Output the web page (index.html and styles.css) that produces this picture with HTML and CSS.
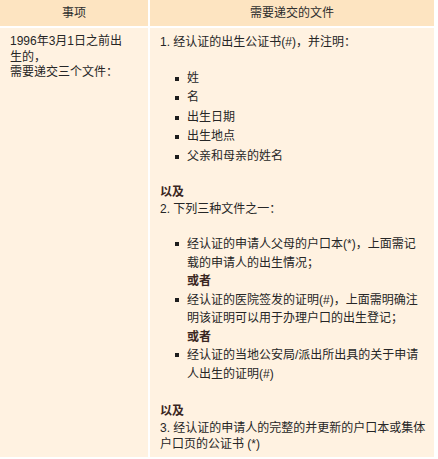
FILE: index.html
```html
<!DOCTYPE html>
<html lang="zh">
<head>
<meta charset="utf-8">
<link rel="stylesheet" href="styles.css">
</head>
<body>
<div class="table">
  <div class="th">事项</div>
  <div class="th">需要递交的文件</div>
  <div class="td col1">1996年3月1日之前出生的，<br>需要递交三个文件：</div>
  <div class="td col2">
    <p class="para">1. 经认证的出生公证书(#)，并注明：</p>
    <ul class="list list-a">
      <li>姓</li>
      <li>名</li>
      <li>出生日期</li>
      <li>出生地点</li>
      <li>父亲和母亲的姓名</li>
    </ul>
    <p class="para"><b class="em">以及</b><br>2. 下列三种文件之一：</p>
    <ul class="list list-b">
      <li>经认证的申请人父母的户口本(*)，上面需记载的申请人的出生情况；<br><b class="em">或者</b></li>
      <li>经认证的医院签发的证明(#)，上面需明确注明该证明可以用于办理户口的出生登记；<br><b class="em">或者</b></li>
      <li>经认证的当地公安局/派出所出具的关于申请人出生的证明(#)</li>
    </ul>
    <p class="para"><b class="em">以及</b><br>3. 经认证的申请人的完整的并更新的户口本或集体户口页的公证书 (*)</p>
  </div>
</div>
</body>
</html>
```

FILE: styles.css
```css
html, body {
  margin: 0;
  padding: 0;
  background: #ffffff;
}

body {
  font-family: "Liberation Sans", "Noto Sans CJK SC", sans-serif;
  font-size: 12px;
  color: #262626;
}

.table {
  width: 434px;
  display: grid;
  grid-template-columns: 148px 1fr;
  gap: 2px;
  background: #ffffff;
}

.th {
  background: #fde4c1;
  height: 26px;
  line-height: 26px;
  text-align: center;
  color: #2e2e2e;
}

.td {
  background: #fff2e1;
}

.col1 {
  padding: 6px 14px 0 10px;
  line-height: 15.5px;
}

.col2 {
  padding: 6px 8px 4px 10px;
}

.para {
  margin: 0;
  line-height: 16.5px;
}

.em {
  font-weight: bold;
  color: #3a2622;
}

.list {
  list-style: none;
  margin: 18px 0;
  padding: 0 0 0 27px;
}

.list li {
  position: relative;
}

.list li::before {
  content: "";
  position: absolute;
  left: -12px;
  top: 8px;
  width: 4px;
  height: 4px;
  background: #1e1e1e;
}

.list-a li {
  line-height: 19.5px;
}

.list-b {
  margin: 18px 0 20px;
}

.list-b li {
  line-height: 18.5px;
}

.list-b li::before {
  top: 7px;
}
```
